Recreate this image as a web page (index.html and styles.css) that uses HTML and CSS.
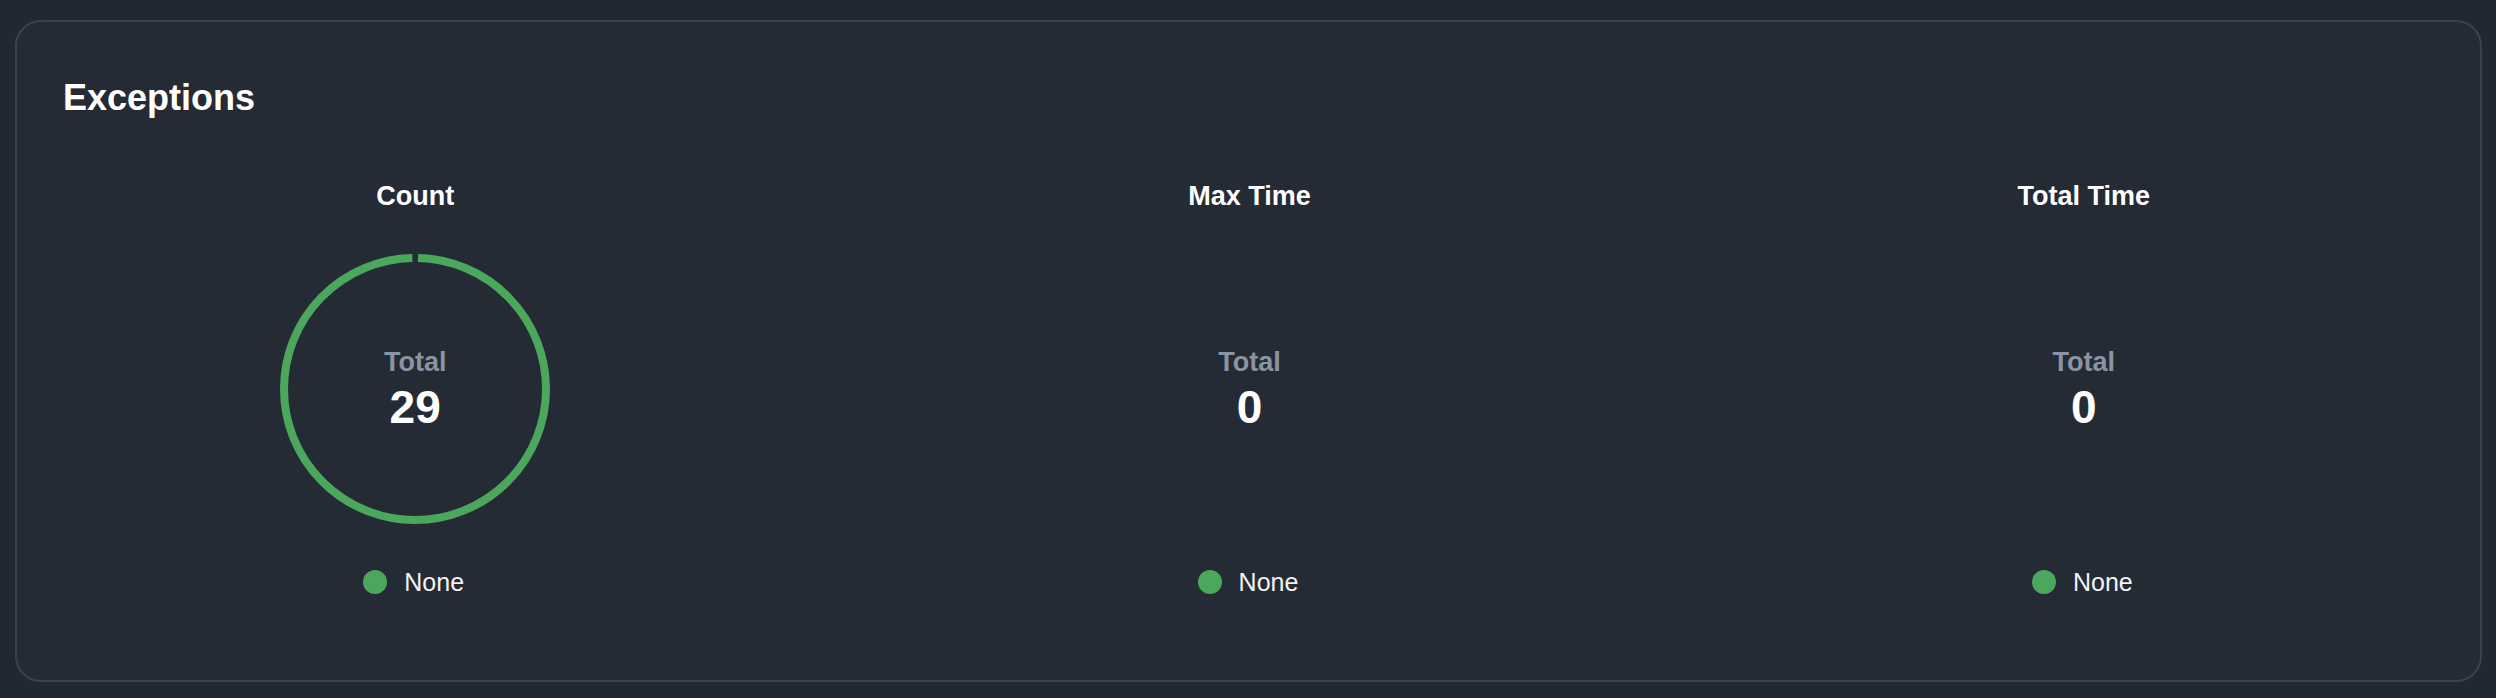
FILE: index.html
```html
<!DOCTYPE html>
<html lang="en">
<head>
<meta charset="utf-8">
<title>Exceptions</title>
<link rel="stylesheet" href="styles.css">
</head>
<body>
<section class="card">
  <h2 class="card-title">Exceptions</h2>
  <div class="metrics">
    <div class="metric">
      <h3 class="metric-title">Count</h3>
      <div class="chart">
        <svg class="ring" width="270" height="270" viewBox="0 0 270 270">
          <circle cx="135" cy="135" r="131" fill="none" stroke="#4aa75c" stroke-width="8" stroke-dasharray="0 3 817.08 3" transform="rotate(-90 135 135)"/>
        </svg>
        <div class="center">
          <span class="center-label">Total</span>
          <span class="center-value">29</span>
        </div>
      </div>
      <div class="legend"><span class="dot"></span><span class="legend-text">None</span></div>
    </div>
    <div class="metric">
      <h3 class="metric-title">Max Time</h3>
      <div class="chart">
        <div class="center">
          <span class="center-label">Total</span>
          <span class="center-value">0</span>
        </div>
      </div>
      <div class="legend"><span class="dot"></span><span class="legend-text">None</span></div>
    </div>
    <div class="metric">
      <h3 class="metric-title">Total Time</h3>
      <div class="chart">
        <div class="center">
          <span class="center-label">Total</span>
          <span class="center-value">0</span>
        </div>
      </div>
      <div class="legend"><span class="dot"></span><span class="legend-text">None</span></div>
    </div>
  </div>
</section>
</body>
</html>
```

FILE: styles.css
```css
html, body {
  margin: 0;
  padding: 0;
  background: #222831;
}
body {
  padding: 20px 14px 16px 15px;
  font-family: "Liberation Sans", Arial, Helvetica, sans-serif;
  color: #ffffff;
}
.card {
  box-sizing: border-box;
  height: 662px;
  background: #252b35;
  border: 2px solid #3b424e;
  border-radius: 26px;
  padding: 54px 44px 80px 46px;
}
.card-title {
  margin: 0;
  font-size: 36px;
  line-height: 44px;
  font-weight: 700;
}
.metrics {
  margin-top: 60px;
  display: grid;
  grid-template-columns: repeat(3, 1fr);
  column-gap: 130px;
}
.metric {
  display: flex;
  flex-direction: column;
  align-items: center;
}
.metric-title {
  margin: 0;
  font-size: 27px;
  line-height: 32px;
  font-weight: 700;
}
.chart {
  margin-top: 42px;
  width: 270px;
  height: 270px;
  display: grid;
  place-items: center;
}
.chart > * {
  grid-area: 1 / 1;
}
.ring {
  display: block;
}
.center {
  display: flex;
  flex-direction: column;
  align-items: center;
  padding-top: 3px;
}
.center-label {
  font-size: 27px;
  line-height: 32px;
  font-weight: 700;
  color: #8a94a3;
}
.center-value {
  font-size: 46px;
  line-height: 58px;
  font-weight: 700;
  color: #ffffff;
}
.legend {
  margin-top: 43px;
  display: flex;
  align-items: center;
  gap: 17px;
  height: 30px;
  margin-left: -3px;
}
.dot {
  width: 24px;
  height: 24px;
  border-radius: 50%;
  background: #4aa75c;
}
.legend-text {
  font-size: 25px;
  line-height: 30px;
  color: #f2f3f5;
}
```
